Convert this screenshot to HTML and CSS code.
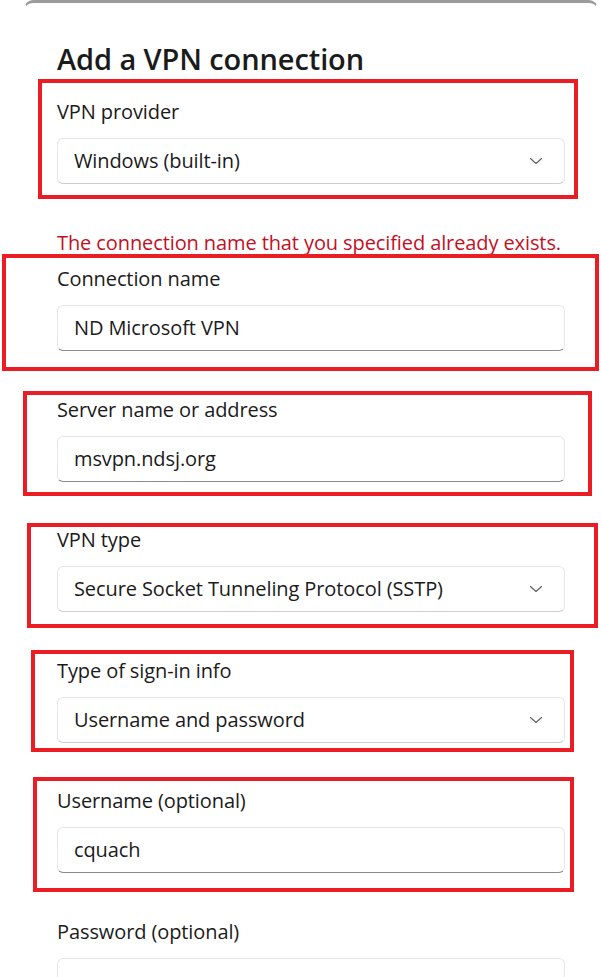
FILE: index.html
```html
<!DOCTYPE html>
<html lang="en">
<head>
<meta charset="utf-8">
<title>Add a VPN connection</title>
<link rel="stylesheet" href="styles.css">
</head>
<body>
<div class="dialog">
  <h1 class="title">Add a VPN connection</h1>

  <div class="field">
    <div class="label">VPN provider</div>
    <div class="control combo">
      <span class="value">Windows (built-in)</span>
      <svg class="chev" width="14" height="8" viewBox="0 0 14 8"><path d="M1.5 1.5 L7 6.5 L12.5 1.5" fill="none" stroke="#626262" stroke-width="1.15" stroke-linecap="round" stroke-linejoin="round"/></svg>
    </div>
  </div>

  <p class="error">The connection name that you specified already exists.</p>

  <div class="field">
    <div class="label">Connection name</div>
    <div class="control text"><span class="value">ND Microsoft VPN</span></div>
  </div>

  <div class="field">
    <div class="label">Server name or address</div>
    <div class="control text"><span class="value">msvpn.ndsj.org</span></div>
  </div>

  <div class="field">
    <div class="label">VPN type</div>
    <div class="control combo">
      <span class="value">Secure Socket Tunneling Protocol (SSTP)</span>
      <svg class="chev" width="14" height="8" viewBox="0 0 14 8"><path d="M1.5 1.5 L7 6.5 L12.5 1.5" fill="none" stroke="#626262" stroke-width="1.15" stroke-linecap="round" stroke-linejoin="round"/></svg>
    </div>
  </div>

  <div class="field">
    <div class="label">Type of sign-in info</div>
    <div class="control combo">
      <span class="value">Username and password</span>
      <svg class="chev" width="14" height="8" viewBox="0 0 14 8"><path d="M1.5 1.5 L7 6.5 L12.5 1.5" fill="none" stroke="#626262" stroke-width="1.15" stroke-linecap="round" stroke-linejoin="round"/></svg>
    </div>
  </div>

  <div class="field">
    <div class="label">Username (optional)</div>
    <div class="control text"><span class="value">cquach</span></div>
  </div>

  <div class="field">
    <div class="label">Password (optional)</div>
    <div class="control text"></div>
  </div>
</div>

<div class="mark m1"></div>
<div class="mark m2"></div>
<div class="mark m3"></div>
<div class="mark m4"></div>
<div class="mark m5"></div>
<div class="mark m6"></div>
</body>
</html>
```

FILE: styles.css
```css
html, body {
  margin: 0;
  padding: 0;
  background: #ffffff;
}
body {
  width: 601px;
  height: 977px;
  overflow: hidden;
  position: relative;
  font-family: "Open Sans", "Noto Sans", sans-serif;
  color: #1b1b1b;
}
.dialog {
  margin-left: 24px;
  width: 574px;
  box-sizing: border-box;
  border-top: 3px solid #9b9b9b;
  border-left: 1px solid transparent;
  border-right: 1px solid transparent;
  border-radius: 9px 9px 0 0;
  background: #ffffff;
  padding: 38px 0 0 32px;
  display: flex;
  flex-direction: column;
}
.title {
  margin: 0 0 21px 0;
  font-size: 29px;
  line-height: 36px;
  font-weight: 600;
  letter-spacing: -0.1px;
  color: #1b1b1b;
}
.field {
  display: flex;
  flex-direction: column;
  gap: 12px;
  width: 508px;
}
.field + .field {
  margin-top: 44.6px;
}
.label {
  font-size: 20px;
  line-height: 28px;
  letter-spacing: -0.1px;
}
.control {
  box-sizing: border-box;
  height: 46px;
  border: 1px solid #e6e6e6;
  border-radius: 6px;
  background: #ffffff;
  display: flex;
  align-items: center;
  padding: 0 21px 0 16px;
}
.combo {
  border-bottom-color: #cdcdcd;
  justify-content: space-between;
}
.text {
  border-bottom: 1px solid #8a8a8a;
}
.value {
  font-size: 20px;
  line-height: 28px;
  letter-spacing: -0.1px;
  color: #1b1b1b;
}
.chev {
  display: block;
  flex: none;
}
.error {
  margin: 45px 0 8px 0;
  font-size: 20px;
  line-height: 28px;
  letter-spacing: -0.1px;
  color: #c50f1f;
}
.mark {
  position: absolute;
  box-sizing: border-box;
  border: 4px solid #ea1c24;
  pointer-events: none;
}
.m1 { left: 38px; top: 79px; width: 540px; height: 120px; }
.m2 { left: 2px; top: 254px; width: 597px; height: 117px; }
.m3 { left: 23px; top: 391px; width: 569px; height: 105px; }
.m4 { left: 27px; top: 523px; width: 571px; height: 105px; }
.m5 { left: 31px; top: 650px; width: 543px; height: 102px; }
.m6 { left: 33px; top: 777px; width: 541px; height: 115px; }
```
